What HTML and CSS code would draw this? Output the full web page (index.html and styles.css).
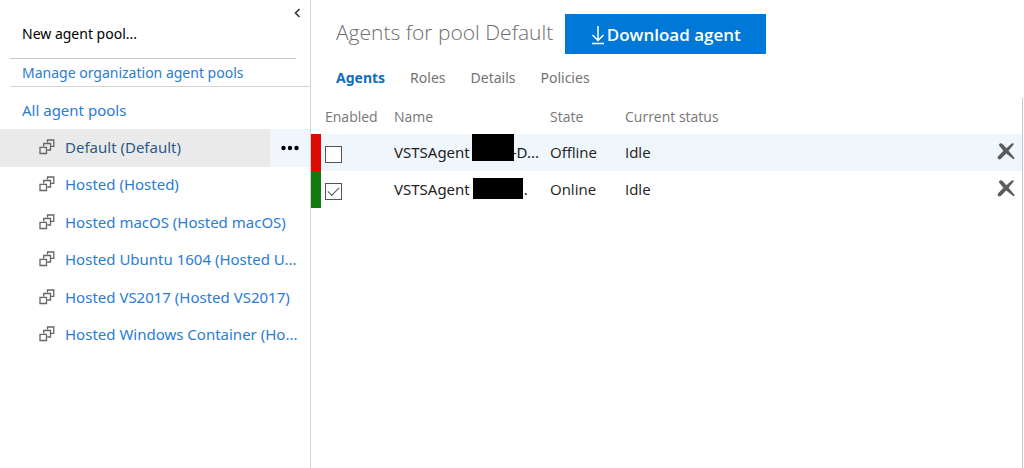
FILE: index.html
```html
<!DOCTYPE html>
<html lang="en">
<head>
<meta charset="utf-8">
<title>Agent pools</title>
<link rel="stylesheet" href="styles.css">
</head>
<body>
<svg class="defs" aria-hidden="true">
  <symbol id="pool" viewBox="0 0 16 16">
    <g fill="none" stroke="#666" stroke-width="1.3">
      <path d="M8.5 3.5V1h6.300v6.300H12"/>
      <path d="M4.700 7.500V4.500h6.800v6.500H8.300"/>
      <path d="M1 8.300h6.500v6.200H1z"/>
    </g>
  </symbol>
  <symbol id="remove" viewBox="0 0 20 20">
    <path d="M3 4.500C3 2 5.200 1.600 6.600 3L10.400 7.200 16 2.300 18.200 2.800 12.600 9.800 18.800 17.300 17.500 18.200 10.200 12.400 4.800 18C3 19.200 .6 17.500 2 15.500L7.400 9.800z" fill="#5c5c5c"/>
  </symbol>
</svg>
<div class="app">
  <aside class="sidebar">
    <div class="top">
      <button class="new" type="button">New agent pool...</button>
      <button class="collapse" type="button" aria-label="Collapse">
        <svg width="7" height="10" viewBox="0 0 7 10"><path d="M5.500 1L1.500 5l4 4" fill="none" stroke="#333" stroke-width="1.600"/></svg>
      </button>
    </div>
    <div class="manage"><a href="#">Manage organization agent pools</a></div>
    <a class="all" href="#">All agent pools</a>
    <ul class="pools">
      <li class="current"><svg class="icon"><use href="#pool"/></svg><a href="#">Default (Default)</a>
        <button class="more" type="button" aria-label="More actions"><svg width="18" height="6" viewBox="0 0 18 6"><circle cx="2.500" cy="3" r="2.200"/><circle cx="9" cy="3" r="2.200"/><circle cx="15.500" cy="3" r="2.200"/></svg></button></li>
      <li><svg class="icon"><use href="#pool"/></svg><a href="#">Hosted (Hosted)</a></li>
      <li><svg class="icon"><use href="#pool"/></svg><a href="#">Hosted macOS (Hosted macOS)</a></li>
      <li><svg class="icon"><use href="#pool"/></svg><a href="#">Hosted Ubuntu 1604 (Hosted U...</a></li>
      <li><svg class="icon"><use href="#pool"/></svg><a href="#">Hosted VS2017 (Hosted VS2017)</a></li>
      <li><svg class="icon"><use href="#pool"/></svg><a href="#">Hosted Windows Container (Ho...</a></li>
    </ul>
  </aside>
  <main class="main">
    <header class="head">
      <h1>Agents for pool Default</h1>
      <button class="download" type="button"><svg width="14" height="20" viewBox="0 0 14 20"><path d="M7 1v14M1.500 10L7 15.500 12.500 10M1 18.500h12" fill="none" stroke="#fff" stroke-width="1.500"/></svg>Download agent</button>
    </header>
    <nav class="tabs">
      <a class="active" href="#">Agents</a><a href="#">Roles</a><a href="#">Details</a><a href="#">Policies</a>
    </nav>
    <div class="grid">
      <table>
        <colgroup><col class="c-enabled"><col class="c-name"><col class="c-state"><col class="c-status"><col class="c-remove"></colgroup>
        <thead><tr><th>Enabled</th><th>Name</th><th>State</th><th>Current status</th><th></th></tr></thead>
        <tbody>
          <tr class="offline">
            <td><input type="checkbox" aria-label="Enable first agent"></td>
            <td><span class="name">VSTSAgent<span class="mask"></span>-D...</span></td>
            <td>Offline</td><td>Idle</td>
            <td><button class="remove" type="button" aria-label="Remove"><svg width="20" height="20"><use href="#remove"/></svg></button></td>
          </tr>
          <tr class="online">
            <td><input type="checkbox" checked aria-label="Enable second agent"></td>
            <td><span class="name">VSTSAgent<span class="mask wide"></span>..</span></td>
            <td>Online</td><td>Idle</td>
            <td><button class="remove" type="button" aria-label="Remove"><svg width="20" height="20"><use href="#remove"/></svg></button></td>
          </tr>
        </tbody>
      </table>
    </div>
  </main>
</div>
</body>
</html>
```
FILE: styles.css
```css
* { box-sizing: border-box; }
body {
  margin: 0;
  background: #fff;
  color: #222;
  font: 15px/20px "Open Sans", "Noto Sans", sans-serif;
}
.defs { position: absolute; width: 0; height: 0; }
a { color: #2b7cd3; text-decoration: none; }
button { border: 0; padding: 0; background: none; color: inherit; font: inherit; cursor: pointer; }
svg { display: block; flex: none; }
.app { display: flex; min-height: 100vh; }
.sidebar, .tabs, .name { font-family: "Noto Sans", "Open Sans", sans-serif; }

.sidebar { flex: none; width: 311px; border-right: 1px solid #d4d4d4; }
.top {
  display: flex;
  align-items: flex-start;
  justify-content: space-between;
  height: 59px;
  margin: 0 14px 0 10px;
  padding: 8px 0 0 12px;
  border-bottom: 1px solid #c8c8c8;
}
.new { margin-top: 16px; font-size: 14px; color: #000; }
.collapse { margin-right: -5px; }
.manage { margin-left: 10px; padding: 4px 0 3px 12px; border-bottom: 1px solid #d4d4d4; font-size: 14px; }
.all { display: block; padding: 13px 22px 9px; }
.pools {
  display: grid;
  grid-auto-rows: 1fr;
  min-height: 225px;
  margin: 0;
  padding: 0;
  list-style: none;
}
.pools li { display: flex; align-items: center; padding-left: 39px; white-space: nowrap; }
.pools a { padding-bottom: 2px; }
.icon { width: 16px; height: 16px; margin: 0 10px 2px 0; }
.pools .current { background: #eaeaea; }
.current a { color: #2d5a87; }
.more {
  display: flex;
  align-items: center;
  justify-content: center;
  align-self: stretch;
  width: 40px;
  margin-left: auto;
  background: #eff6fc;
  color: #000;
}

.main { display: flex; flex-direction: column; flex: 1; min-width: 0; }
.head { display: flex; align-items: center; gap: 12px; padding: 14px 0 0 25px; }
h1 { margin: 0; padding-bottom: 4px; color: #6e6e6e; font-size: 21px; line-height: 28px; font-weight: 300; }
.download {
  display: flex;
  align-items: center;
  justify-content: center;
  gap: 2px;
  width: 201px;
  height: 40px;
  padding-top: 2px;
  background: #0078d7;
  color: #fff;
  font-size: 17px;
  font-weight: 600;
}
.tabs { display: flex; gap: 25px; padding: 14px 25px 10px; font-size: 14px; }
.tabs a { color: #737373; }
.tabs .active { color: #106ebe; font-weight: 700; }
.grid { flex: 1; margin-right: 1px; border-right: 1px solid #c8c8c8; }
table { width: 100%; border-collapse: separate; border-spacing: 0; table-layout: fixed; }
.c-enabled { width: 83px; }
.c-name { width: 156px; }
.c-state { width: 75px; }
.c-remove { width: 26px; }
th { height: 36px; padding: 2px 0 0; color: #777; font-size: 14px; font-weight: 400; text-align: left; }
td { height: 37px; padding: 0 0 2px; white-space: nowrap; }
th:first-child { padding-left: 14px; }
td:first-child { padding: 3px 0 0 4px; border-left: 10px solid #107c10; }
.offline { background: #eff6fc; }
.offline td:first-child { border-left-color: #dc0a00; }
input {
  appearance: none;
  display: grid;
  place-items: center;
  width: 17px;
  height: 17px;
  margin: 0;
  border: 1px solid #555;
  background: #fff;
}
input:checked::after {
  content: "";
  width: 10px;
  height: 5px;
  margin-bottom: 3px;
  border: solid #555;
  border-width: 0 0 1px 1px;
  rotate: -45deg;
}
.name { display: flex; align-items: center; height: 28px; }
.mask { width: 42px; height: 27px; margin: -8px -2px 0 2px; background: #000; z-index: 1; }
.wide { width: 50px; height: 21px; margin: 0 -3px 0 3px; }
.remove { display: block; margin-bottom: 1px; }
```
